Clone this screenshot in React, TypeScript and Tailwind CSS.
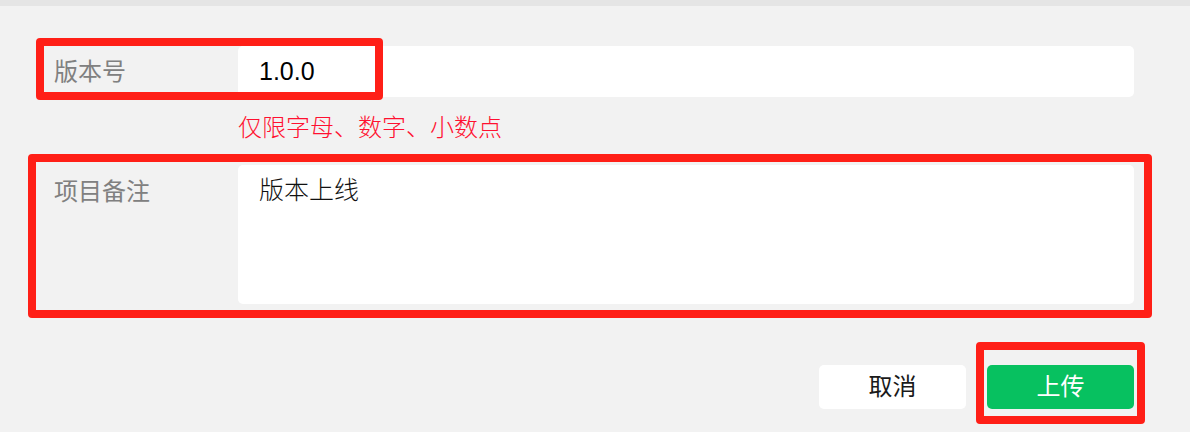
export default function App() {
  const font = { fontFamily: '"Liberation Sans", "Noto Sans CJK SC", sans-serif' };
  return (
    <div
      className="relative w-[1190px] h-[432px] bg-[#f2f2f2] overflow-hidden"
      style={font}
    >
      {/* top strip */}
      <div className="h-[6px] bg-[#e5e5e5]" />

      <div className="pl-[54px] pr-[56px]">
        {/* version row */}
        <div className="mt-[40px] flex items-center h-[51px]">
          <div className="w-[184px] text-[24px] text-[#808080]">版本号</div>
          <div className="flex-1 h-full bg-white rounded-[5px] flex items-center pl-[21px] text-[25px] text-black">
            1.0.0
          </div>
        </div>

        {/* hint */}
        <div className="ml-[184px] mt-[15px] h-[32px] leading-[32px] text-[24px] text-[#ff1030] font-light">
          仅限字母、数字、小数点
        </div>

        {/* remark row */}
        <div className="mt-[21px] flex h-[139px]">
          <div className="w-[184px] pt-[11px] text-[24px] leading-[32px] text-[#808080]">
            项目备注
          </div>
          <div className="flex-1 h-full bg-white rounded-[5px] pl-[21px] pt-[9px] text-[25px] leading-[32px] text-[#111111] font-light">
            版本上线
          </div>
        </div>

        {/* buttons */}
        <div className="mt-[61px] flex justify-end gap-[21px]">
          <button className="w-[147px] h-[44px] bg-white rounded-[5px] text-[24px] text-[#1a1a1a]">
            取消
          </button>
          <button className="w-[147px] h-[44px] bg-[#07c160] rounded-[5px] text-[24px] text-white">
            上传
          </button>
        </div>
      </div>

      {/* red annotation boxes */}
      <div className="absolute left-[36px] top-[38px] w-[347px] h-[62px] border-[8px] border-[#ff1f17] rounded-[4px]" />
      <div className="absolute left-[28px] top-[154px] w-[1124px] h-[164px] border-[8px] border-[#ff1f17] rounded-[4px]" />
      <div className="absolute left-[976px] top-[342px] w-[169px] h-[82px] border-[8px] border-[#ff1f17] rounded-[4px]" />
    </div>
  );
}
